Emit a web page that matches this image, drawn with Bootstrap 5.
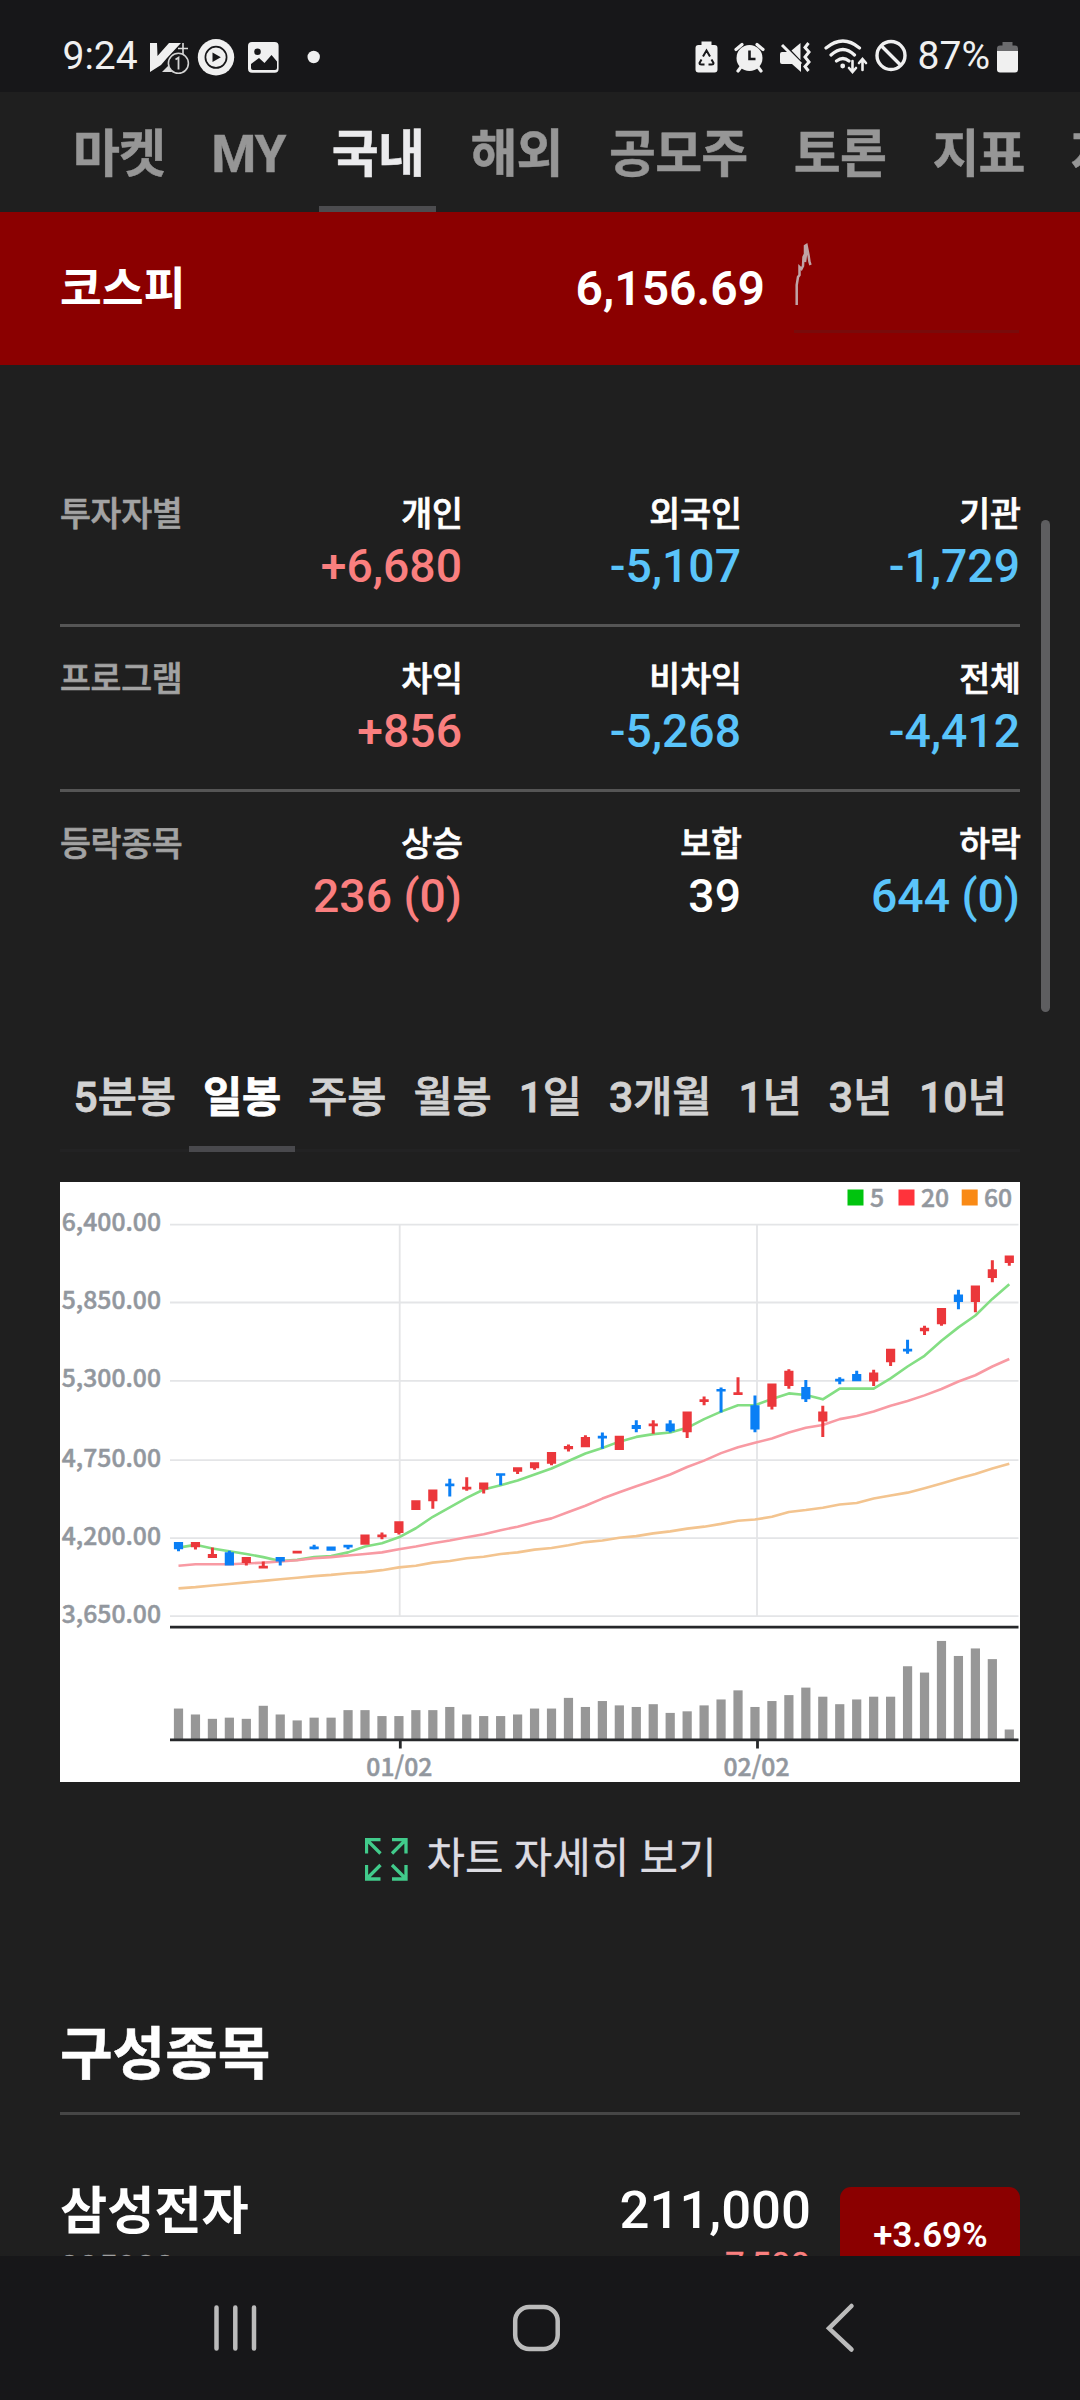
<!DOCTYPE html>
<html lang="ko" data-bs-theme="dark">
<head>
<meta charset="utf-8">
<meta name="viewport" content="width=device-width, initial-scale=1">
<title>국내 증시</title>
<link href="https://cdn.jsdelivr.net/npm/bootstrap@5.3.0/dist/css/bootstrap.min.css" rel="stylesheet">
<style>
body{height:2400px;background:#1f1f1f;color:#fff;font-family:Roboto,"Noto Sans CJK KR",sans-serif;font-size:33.6px;line-height:1.2;overflow:hidden}
svg{display:block;flex:none}
.status-bar{height:92px;background:#171719;color:#f0f0f0;font-size:39px;line-height:71px;padding:21px 62px 0 62.5px}
.sys-nav{height:144px;background:#171719;padding:0 90px 0 84px}
.top-tabs{height:120px;padding-left:60.5px;gap:21.6px}
.top-tabs .nav-link{padding:6px 12.4px 0;font-size:51px;font-weight:700;line-height:114px;height:120px;letter-spacing:-.8px;color:#969696;border-bottom:6px solid transparent;border-radius:0;-webkit-text-stroke:.5px}
.top-tabs .nav-link.active{color:#ebebed;border-color:#4c4c4f}
.index-bar{height:153px;background:#8b0000;padding:0 60px}
.index-name{font-size:45.5px;font-weight:700;padding-top:3px}
.index-value{font-size:48px;font-weight:600;margin-right:28px}
.flow-table{margin:97px 60px 0}
.flow-row{padding:28px 0 29px;border-bottom:3px solid #555}
.flow-row:last-child{border-bottom:0}
.flow-label{width:123px;white-space:nowrap;color:#a3a3a3;font-weight:500;line-height:49px;letter-spacing:-.3px;-webkit-text-stroke:.7px}
.flow-cell{width:279px;text-align:right;font-weight:500}
.flow-title{line-height:49px;height:48px;margin-right:-1px;-webkit-text-stroke:.7px}
.flow-value{font-size:46.3px;line-height:57px;height:57px}
.up{color:#fa7f7f}
.down{color:#5ac4fa}
.scroll-thumb{top:520px;left:1041px;width:9px;height:492px;border-radius:5px;background:#5e5e60}
.period-tabs{margin:94px 60px 30px;height:104px;box-shadow:inset 0 -3px 0 #222223}
.period-tabs .nav-link{padding:0;font-size:42.6px;font-weight:500;line-height:98px;height:104px;color:#d2d2d2;white-space:nowrap;border-bottom:6px solid transparent;border-radius:0;-webkit-text-stroke:.8px}
.period-tabs .nav-link.active{color:#fff;font-weight:700;border-color:#49494d}
.chart-panel{margin:0 60px;height:600px;background:#fff}
.chart-panel text{font-family:"Noto Sans CJK KR",sans-serif;font-weight:500;font-size:24.7px;fill:#92979e;stroke:#92979e;stroke-width:.5px}
.detail-link{height:154px;font-size:41.8px;gap:19px;color:#dddce2;padding-left:1px;-webkit-text-stroke:.3px}
.section-head{margin:81px 60px 0;padding-bottom:19px;border-bottom:3px solid #464646;font-size:57.2px;font-weight:700;line-height:76px;-webkit-text-stroke:.5px}
.stock-row{padding:66px 60px 0}
.stock-name{font-size:51.3px;font-weight:700;line-height:61px}
.stock-price{font-size:52.7px;font-weight:500;line-height:59px}
.stock-sub{font-size:34px;line-height:50px;-webkit-text-stroke:.3px}
.stock-diff{font-size:34.800px;padding-right:1px}
.stock-code{color:#a0a0a0}
.rate-badge{width:180px;height:97px;margin:6px 0 0 29px;border-radius:11px;background:#8b0000;font-size:34.8px;font-weight:600;padding-left:1px}
</style>
</head>
<body class="d-flex flex-column">

<header class="status-bar d-flex flex-shrink-0 align-items-center justify-content-between">
  <div class="d-flex align-items-center">
    <span>9:24</span>
    <svg width="40" height="40" style="margin-left:12px">
      <path d="M0 6h7l.5 13L19 6h12L17 21l-6 7L0 35z" fill="#f0f0f0"/><path d="M12 35l8-8 2 8z" fill="#ddd"/>
      <path d="M33 6v12M28 11.500h10" stroke="#ddd" stroke-width="1.600"/>
      <circle cx="28.400" cy="26.300" r="10" fill="#171719" stroke="#d4d4d4" stroke-width="1.600"/>
      <path d="M25.500 22.500l3-1.800V32.500" fill="none" stroke="#d4d4d4" stroke-width="1.800"/>
    </svg>
    <svg width="40" height="40" style="margin-left:6px"><circle cx="20" cy="20.300" r="18.200" fill="#f0f0f0"/><circle cx="20" cy="20.300" r="10.600" fill="none" stroke="#171719" stroke-width="1.700"/><path d="M16.500 15.500v9.600l8.300-4.800z" fill="#171719"/></svg>
    <svg width="40" height="40" style="margin-left:7px"><rect x="5" y="5" width="30.600" height="30.700" rx="4" fill="#f0f0f0"/><circle cx="14.500" cy="14.700" r="3.300" fill="#171719"/><path d="M8 27l8-6 5.500 5 7-8 5.500 6.500V31q0 2-2 2H10q-2 0-2-2z" fill="#171719"/></svg>
    <svg width="40" height="40" style="margin-left:11px"><circle cx="19.700" cy="20" r="6.200" fill="#f0f0f0"/></svg>
  </div>
  <div class="d-flex align-items-center">
    <svg width="40" height="40" style="margin-right:3px"><path d="M14.500 4.500h10v3.500h3q3 0 3 3v21.500q0 3-3 3h-16q-3 0-3-3V11q0-3 3-3h3z" fill="#f0f0f0"/><path d="M16 19.500l3.500-6 3.500 6M24.500 22.500l2 3.500q0 1.500-2 1.500h-3M17.500 27.500h-3q-2 0-2-1.500l2-3.500" fill="none" stroke="#171719" stroke-width="2"/></svg>
    <svg width="40" height="40" style="margin-right:6px"><circle cx="19.500" cy="21" r="13" fill="#f0f0f0"/><path d="M6 12.500l6-5M33 12.500l-6-5M11 30l-3 4M28 30l3 4" stroke="#f0f0f0" stroke-width="3.200" stroke-linecap="round"/><path d="M19.500 13.500v8.500h6" fill="none" stroke="#171719" stroke-width="2.600"/></svg>
    <svg width="40" height="40" style="margin-right:7px"><path d="M4 17q0-2 2-2h6l13 12v8l-9-8H6q-2 0-2-2zM24.500 6v17L15.500 13.500z" fill="#f0f0f0"/><path d="M6 8l19 19" stroke="#f0f0f0" stroke-width="3"/><path d="M32.500 6l-3.500 4.500 4 4.500-4 5 4 5-4 4.500 3.500 4.500" fill="none" stroke="#f0f0f0" stroke-width="3"/></svg>
    <svg width="48" height="40"><g fill="none" stroke="#f0f0f0" stroke-width="3.200" stroke-linecap="round"><path d="M3 11Q20-3 36.500 11M8 18Q20 7 31.500 18M13.500 24q6.500-5 12.500 0"/><path d="M29.500 24v10.500M26 31l3.500 4 3.500-4M39.500 33V22.500M36 26l3.500-4 3.500 4" stroke-width="2.600"/></g><circle cx="19.700" cy="29" r="2.400" fill="#f0f0f0"/></svg>
    <svg width="40" height="40" style="margin-right:7px"><circle cx="20" cy="18.500" r="14" fill="none" stroke="#f0f0f0" stroke-width="3.400"/><path d="M10 8.500l20 20" stroke="#f0f0f0" stroke-width="3.400"/></svg>
    <span>87%</span>
    <svg width="21" height="40" style="margin-left:7px"><path d="M5.500 5h10v3.500h2.500q3 0 3 3V14H0v-2.500q0-3 3-3h2.500z" fill="#6b6b6d"/><path d="M0 14h21v18.500q0 3-3 3H3q-3 0-3-3z" fill="#f0f0f0"/></svg>
  </div>
</header>

<main class="flex-grow-1 overflow-hidden" style="min-height:0">
  <nav class="nav top-tabs flex-nowrap text-nowrap overflow-hidden">
    <a class="nav-link">마켓</a><a class="nav-link">MY</a><a class="nav-link active">국내</a><a class="nav-link">해외</a><a class="nav-link">공모주</a><a class="nav-link">토론</a><a class="nav-link">지표</a><a class="nav-link">자산</a>
  </nav>

  <section class="index-bar d-flex align-items-center">
    <div class="index-name me-auto">코스피</div>
    <div class="index-value">6,156.69</div>
    <svg width="227" height="153"><path d="M1 119.500H226" stroke="#790b0b" stroke-width="3"/><path d="M3.700 93V73l1.300-8 1.500-2V55l2 2 1.500-3 .5-9 1.500-3v-8l1.500-1 2 10 1 7 1 3M12 50l1.500-12" fill="none" stroke="#c0a4a6" stroke-width="2.500"/></svg>
  </section>

  <section class="flow-table">
    <div class="flow-row d-flex">
      <div class="flow-label">투자자별</div>
      <div class="flow-cell"><div class="flow-title">개인</div><div class="flow-value up">+6,680</div></div>
      <div class="flow-cell"><div class="flow-title">외국인</div><div class="flow-value down">-5,107</div></div>
      <div class="flow-cell"><div class="flow-title">기관</div><div class="flow-value down">-1,729</div></div>
    </div>
    <div class="flow-row d-flex">
      <div class="flow-label">프로그램</div>
      <div class="flow-cell"><div class="flow-title">차익</div><div class="flow-value up">+856</div></div>
      <div class="flow-cell"><div class="flow-title">비차익</div><div class="flow-value down">-5,268</div></div>
      <div class="flow-cell"><div class="flow-title">전체</div><div class="flow-value down">-4,412</div></div>
    </div>
    <div class="flow-row d-flex">
      <div class="flow-label">등락종목</div>
      <div class="flow-cell"><div class="flow-title">상승</div><div class="flow-value up">236 (0)</div></div>
      <div class="flow-cell"><div class="flow-title">보합</div><div class="flow-value">39</div></div>
      <div class="flow-cell"><div class="flow-title">하락</div><div class="flow-value down">644 (0)</div></div>
    </div>
  </section>

  <nav class="nav nav-fill period-tabs flex-nowrap">
    <a class="nav-link nav-item">5분봉</a><a class="nav-link nav-item active">일봉</a><a class="nav-link nav-item">주봉</a><a class="nav-link nav-item">월봉</a><a class="nav-link nav-item">1일</a><a class="nav-link nav-item">3개월</a><a class="nav-link nav-item">1년</a><a class="nav-link nav-item">3년</a><a class="nav-link nav-item">10년</a>
  </nav>

  <section class="chart-panel">
    <svg id="chart" width="960" height="600" viewBox="0 0 960 600">
      <path d="M110 42.600H958.500M110 120.500H958.500M110 198.800H958.500M110 278.200H958.500M110 356.200H958.500M110 434.200H958.500M339.700 42.600V434M697 42.600V434" fill="none" stroke="#e4e5e7" stroke-width="1.800"/>
      <g text-anchor="end"><text x="101" y="49">6,400.00</text><text x="101" y="127">5,850.00</text><text x="101" y="205">5,300.00</text><text x="101" y="284.500">4,750.00</text><text x="101" y="362.500">4,200.00</text><text x="101" y="440.500">3,650.00</text></g>
      <g text-anchor="middle"><text x="339.300" y="593.500">01/02</text><text x="696.500" y="593.500">02/02</text></g>
      <rect x="787.500" y="7.500" width="16" height="16" fill="#00c40e"/><text x="810" y="25">5</text>
      <rect x="838.500" y="7.500" width="16" height="16" fill="#ff333b"/><text x="861" y="25">20</text>
      <rect x="901.700" y="7.500" width="16" height="16" fill="#f98a16"/><text x="924" y="25">60</text>
      <g id="averages" fill="none" stroke-width="2.600" stroke-linejoin="round"></g>
      <g id="candles"></g>
      <g id="volumes" fill="#979797"></g>
      <path d="M110 445.200H958.500M110 557.800H958.500M340.300 557V566.500M697.500 557V566.500" fill="none" stroke="#26282a" stroke-width="2.800"/>
    </svg>
  </section>

  <a class="detail-link d-flex align-items-center justify-content-center text-decoration-none">
    <svg width="43" height="43"><path d="M1.500 15.500v-14h14M1.500 1.500l14 14M27 1.500h14v14M41 1.500l-14 14M1.500 27v14h14M1.500 41l14-14M41 27v14H27M41 41L27 27" fill="none" stroke="#41cb8b" stroke-width="3.300"/></svg>
    <span>차트 자세히 보기</span>
  </a>

  <h2 class="section-head">구성종목</h2>
  <div class="stock-row d-flex">
    <div class="me-auto"><div class="stock-name">삼성전자</div><div class="stock-sub stock-code">005930</div></div>
    <div class="text-end"><div class="stock-price">211,000</div><div class="stock-sub stock-diff up">7,500</div></div>
    <div class="rate-badge d-flex align-items-center justify-content-center">+3.69%</div>
  </div>
</main>
<div class="scroll-thumb position-absolute"></div>

<footer class="sys-nav d-flex flex-shrink-0 align-items-center">
  <div class="flex-fill d-flex justify-content-center"><svg width="60" height="60" fill="none" stroke="#bbb" stroke-width="4.500" stroke-linecap="round"><path d="M11.500 9.500v41M30.300 9.500v41M49 9.500v41"/></svg></div>
  <div class="flex-fill d-flex justify-content-center"><svg width="60" height="60"><rect x="8.200" y="9" width="42.500" height="42" rx="14" fill="none" stroke="#bbb" stroke-width="4.500"/></svg></div>
  <div class="flex-fill d-flex justify-content-center"><svg width="60" height="60"><path d="M42.500 8L20 30.300 42.500 51.500" fill="none" stroke="#bbb" stroke-width="4.500" stroke-linecap="round"/></svg></div>
</footer>

<script src="https://cdn.jsdelivr.net/npm/bootstrap@5.3.0/dist/js/bootstrap.bundle.min.js"></script>
<script>
// Chart data: one entry per trading day, levels on the chart's own vertical scale.
const X = i => 118.500 + 16.955 * i;
const Y = v => v / 2.529 - 12;

// direction, body top, body bottom, high, low
const candles = [
  'b 941 959 941 964','r 941 954 941 960','r 971 981 955 981','b 967 1000 963 1000','r 979 994 979 1000',
  'r 1001 1008 990 1008','b 979 990 979 1000','r 963 970 963 970','b 952 959 948 960','b 952 963 952 963',
  'b 948 955 948 959','r 922 948 922 948','r 922 929 917 934','r 888 918 888 922','r 835 860 835 860',
  'r 808 838 808 857','b 793 800 781 826','r 801 808 777 811','r 790 808 790 818','b 767 773 767 797',
  'r 752 763 752 769','r 739 754 739 758','r 713 743 713 747','r 698 706 694 712','r 675 701 671 701',
  'b 672 679 664 705','r 672 708 672 708','b 645 655 633 663','r 641 648 633 667','b 641 661 633 664',
  'r 611 663 611 678','r 580 587 573 595','b 554 560 550 613','r 562 569 524 569','b 595 656 570 663',
  'r 540 599 540 606','r 508 546 504 553','b 549 580 531 587','r 611 636 596 675','b 528 535 524 542',
  'b 516 534 508 534','r 512 535 505 546','r 452 486 452 496','b 452 459 429 465','r 399 408 394 417',
  'r 349 390 349 394','b 315 334 303 352','r 292 334 292 360','r 251 273 228 284','r 216 235 216 242'];
const volumes = [1362,1377,1388,1385,1388,1355,1377,1392,1385,1385,1366,1366,1381,1381,1366,1366,1358,1377,1381,1381,1381,1377,1362,1362,1335,1358,1343,1354,1358,1351,1373,1369,1354,1339,1316,1358,1343,1328,1309,1332,1351,1339,1332,1332,1255,1271,1191,1229,1210,1237,1415].filter((v, i) => i !== 20);
const averages = {
  '#83de83': [955,948,957,964,971,979,989,986,979,976,967,952,944,929,906,877,853,829,808,797,785,770,755,736,717,703,687,675,668,664,652,630,611,595,595,579,565,569,580,553,553,553,527,497,470,432,398,368,326,289],
  '#f89aa3': [1001,997,997,997,995,993,990,987,982,979,975,971,967,959,952,944,937,929,921,911,902,891,881,865,849,831,815,800,785,770,751,735,716,701,690,679,664,652,645,630,622,611,596,584,570,554,535,519,497,478],
  '#f3c48f': [1058,1055,1051,1047,1043,1039,1035,1031,1027,1024,1020,1017,1012,1005,1001,993,989,982,978,971,967,960,956,949,941,937,930,926,919,914,907,902,895,887,884,877,865,860,854,846,842,831,823,816,805,793,780,769,755,743]
};
document.getElementById('candles').innerHTML = candles.map((c, i) => {
  const [d, t, b, h, l] = c.split(' ');
  return `<path fill="${d === 'r' ? '#eb373b' : '#0a7ff5'}" d="M${X(i) - 4.6} ${Y(t)}h9.200V${Y(b)}h-9.200zM${X(i) - 1.5} ${Y(h)}h3V${Y(l)}h-3z"/>`;
}).join('');
document.getElementById('volumes').innerHTML = volumes.map((v, i) =>
  `<rect x="${X(i) - 4.6}" y="${Y(v)}" width="9.200" height="${557 - Y(v)}"/>`).join('');
document.getElementById('averages').innerHTML = Object.entries(averages).map(([c, a]) =>
  `<polyline stroke="${c}" points="${a.map((v, i) => X(i) + ',' + Y(v)).join(' ')}"/>`).join('');
</script>
</body>
</html>
